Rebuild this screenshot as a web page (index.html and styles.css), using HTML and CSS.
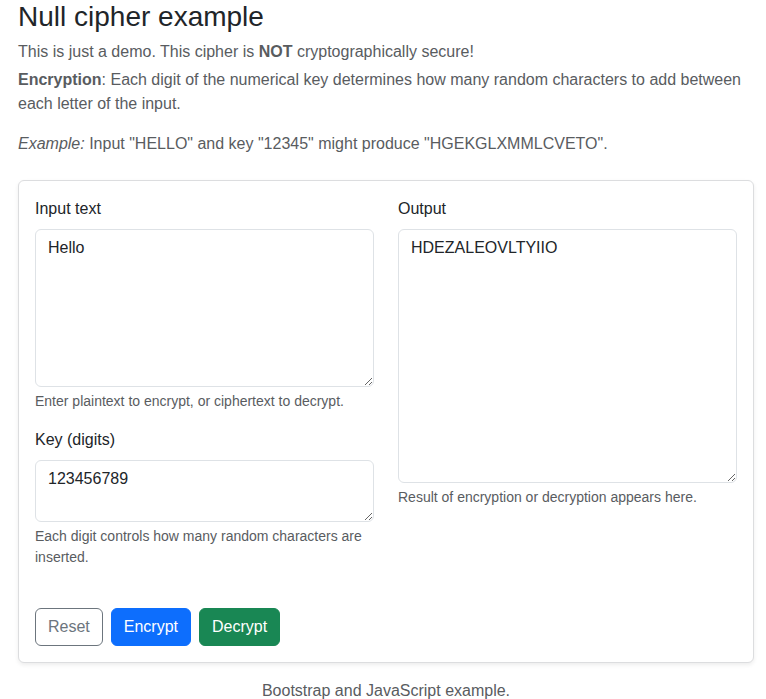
FILE: index.html
```html
<!DOCTYPE html>
<html lang="en">
<head>
<meta charset="utf-8">
<title>Null cipher example</title>
<link rel="stylesheet" href="styles.css">
</head>
<body>
<main class="page">
  <h2 class="title">Null cipher example</h2>
  <p class="intro intro-tight">This is just a demo. This cipher is <strong>NOT</strong> cryptographically secure!</p>
  <p class="intro"><strong>Encryption</strong>: Each digit of the numerical key determines how many random characters to add between each letter of the input.</p>
  <p class="intro intro-last"><em>Example:</em> Input "HELLO" and key "12345" might produce "HGEKGLXMMLCVETO".</p>

  <section class="card">
    <div class="card-body">
      <div class="row">
        <div class="col">
          <div class="group">
            <label class="form-label" for="input">Input text</label>
            <textarea id="input" class="form-control" rows="6">Hello</textarea>
            <div class="form-text">Enter plaintext to encrypt, or ciphertext to decrypt.</div>
          </div>
          <div class="group">
            <label class="form-label" for="key">Key (digits)</label>
            <textarea id="key" class="form-control" rows="2">123456789</textarea>
            <div class="form-text">Each digit controls how many random characters are inserted.</div>
          </div>
        </div>
        <div class="col">
          <div class="group">
            <label class="form-label" for="output">Output</label>
            <textarea id="output" class="form-control" rows="10" readonly>HDEZALEOVLTYIIO</textarea>
            <div class="form-text">Result of encryption or decryption appears here.</div>
          </div>
        </div>
      </div>
      <div class="actions">
        <button class="btn btn-outline" type="button">Reset</button>
        <button class="btn btn-primary" type="button">Encrypt</button>
        <button class="btn btn-success" type="button">Decrypt</button>
      </div>
    </div>
  </section>

  <p class="footer">Bootstrap and JavaScript example.</p>
</main>
</body>
</html>
```

FILE: styles.css
```css
* { box-sizing: border-box; }

html, body {
  margin: 0;
  padding: 0;
  background: #fff;
}

body {
  font-family: "Liberation Sans", Arial, sans-serif;
  font-size: 16px;
  line-height: 24px;
  color: #212529;
}

.page {
  padding: 0 12px 0 18px;
}

.title {
  margin: 0 0 6px;
  font-size: 28px;
  line-height: 33.6px;
  font-weight: 500;
  color: #212529;
}

.intro {
  margin: 0 0 16px;
  color: #595c5f;
}

.intro strong {
  font-weight: 700;
}

.intro-tight { margin-bottom: 4px; }
.intro-last { margin-bottom: 24px; }

.card {
  border: 1px solid #dcdddf;
  border-radius: 6px;
  box-shadow: 0 2px 4px rgba(0, 0, 0, 0.075);
  background: #fff;
}

.card-body {
  padding: 16px;
}

.row {
  display: grid;
  grid-template-columns: 1fr 1fr;
  column-gap: 24px;
}

.group {
  margin-bottom: 16px;
}

.form-label {
  display: block;
  margin-bottom: 8px;
  color: #212529;
}

.form-control {
  display: block;
  width: 100%;
  padding: 6px 12px;
  font-family: inherit;
  font-size: 16px;
  line-height: 24px;
  color: #212529;
  background: #fff;
  border: 1px solid #dee2e6;
  border-radius: 6px;
  resize: vertical;
  margin: 0;
}

.form-text {
  margin-top: 4px;
  font-size: 14px;
  line-height: 21px;
  color: #595c5f;
}

.actions {
  display: flex;
  gap: 8px;
  margin-top: 24px;
}

.btn {
  font-family: inherit;
  font-size: 16px;
  line-height: 24px;
  padding: 6px 12px;
  border: 1px solid transparent;
  border-radius: 6px;
  cursor: pointer;
}

.btn-outline {
  color: #6c757d;
  border-color: #6c757d;
  background: #fff;
}

.btn-primary {
  color: #fff;
  background: #0d6efd;
  border-color: #0d6efd;
}

.btn-success {
  color: #fff;
  background: #198754;
  border-color: #198754;
}

.footer {
  margin: 16px 0 0;
  text-align: center;
  color: #595c5f;
}
```
